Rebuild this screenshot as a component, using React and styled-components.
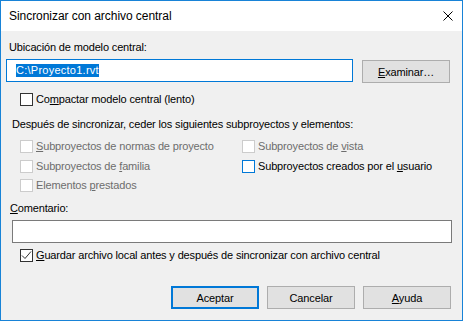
import React from "react";
import styled, { createGlobalStyle, css } from "styled-components";

const Global = createGlobalStyle`
  html, body { margin: 0; padding: 0; background: #f0f0f0; }
  body { font-family: "Liberation Sans", Arial, sans-serif; }
  * { box-sizing: border-box; }
`;

const Window = styled.div`
  width: 463px;
  height: 321px;
  border: 1px solid #1883d7;
  background: #f0f0f0;
  display: flex;
  flex-direction: column;
  overflow: hidden;
`;

const TitleBar = styled.div`
  height: 30px;
  flex: none;
  background: #ffffff;
  display: flex;
  align-items: center;
  padding: 0 9px 0 8px;
  font-size: 12px;
  letter-spacing: -0.05px;
  color: #000;
`;

const Title = styled.div`
  flex: 1;
`;

const CloseBtn = styled.svg`
  width: 10px;
  height: 10px;
  display: block;
`;

const Body = styled.div`
  flex: 1;
  display: flex;
  flex-direction: column;
  padding: 0 10px 0 5px;
  font-size: 11px;
  letter-spacing: -0.15px;
  color: #000;
`;

const Label = styled.div`
  height: 15px;
  line-height: 15px;
  white-space: nowrap;
  margin-top: ${(p) => p.$mt}px;
  margin-left: ${(p) => p.$ml}px;
`;

const InputRow = styled.div`
  display: flex;
  align-items: flex-start;
  margin-top: 4px;
`;

const TextInput = styled.div`
  width: 347px;
  height: 23px;
  background: #ffffff;
  border: 1px solid ${(p) => (p.$focused ? "#0078d7" : "#7a7a7a")};
  display: flex;
  align-items: center;
  padding-left: 9px;
  margin-left: ${(p) => p.$ml || 0}px;
  ${(p) => p.$grow && css`width: auto; flex: 1;`}
`;

const Selection = styled.span`
  background: #0078d7;
  color: #ffffff;
  line-height: 13px;
  height: 13px;
  letter-spacing: 0.25px;
  white-space: nowrap;
`;

const Button = styled.button`
  width: 88px;
  height: 23px;
  margin: 0;
  padding: 0;
  background: #e1e1e1;
  border: ${(p) => (p.$default ? "2px solid #0078d7" : "1px solid #adadad")};
  font-family: "Liberation Sans", Arial, sans-serif;
  font-size: 11px;
  letter-spacing: -0.15px;
  color: #000;
  display: flex;
  align-items: center;
  justify-content: center;
  margin-top: ${(p) => p.$mt || 0}px;
  margin-left: ${(p) => p.$ml || 0}px;
`;

const CheckRow = styled.label`
  display: flex;
  align-items: center;
  gap: 3px;
  height: 15px;
  line-height: 15px;
  white-space: nowrap;
  color: ${(p) => (p.$disabled ? "#6d6d6d" : "#000")};
  margin-top: ${(p) => p.$mt || 0}px;
  margin-left: ${(p) => p.$ml || 0}px;
`;

const Box = styled.span`
  width: 13px;
  height: 13px;
  flex: none;
  background: #ffffff;
  border: 1px solid
    ${(p) => (p.$disabled ? "#cccccc" : p.$focused ? "#0078d7" : "#333333")};
  display: flex;
  align-items: center;
  justify-content: center;
`;

const CheckSvg = styled.svg`
  width: 11px;
  height: 11px;
  display: block;
`;

const OptionsGrid = styled.div`
  display: grid;
  grid-template-columns: 222px 1fr;
  grid-auto-rows: 15px;
  row-gap: 4.5px;
  margin-top: 7px;
  margin-left: 14px;
`;

const ButtonBar = styled.div`
  display: flex;
  justify-content: flex-end;
  gap: 8px;
  margin-top: 23px;
  padding-right: 1px;
`;

const U = styled.span`
  text-decoration: underline;
  text-underline-offset: 1px;
`;

function Checkbox({ children, checked, disabled, focused, mt, ml }) {
  return (
    <CheckRow $disabled={disabled} $mt={mt} $ml={ml}>
      <Box $disabled={disabled} $focused={focused}>
        {checked && (
          <CheckSvg viewBox="0 0 11 11">
            <polyline
              points="1,5.5 4,8.5 10,1.5"
              fill="none"
              stroke="#333"
              strokeWidth="1"
            />
          </CheckSvg>
        )}
      </Box>
      <span>{children}</span>
    </CheckRow>
  );
}

export default function App() {
  return (
    <>
      <Global />
      <Window>
        <TitleBar>
          <Title>Sincronizar con archivo central</Title>
          <CloseBtn viewBox="0 0 10 10">
            <path d="M0.5 0.5 L9.5 9.5 M9.5 0.5 L0.5 9.5" stroke="#000" strokeWidth="1" fill="none" />
          </CloseBtn>
        </TitleBar>
        <Body>
          <Label $mt={9} $ml={3}>Ubicación de modelo central:</Label>
          <InputRow>
            <TextInput $focused>
              <Selection>C:\Proyecto1.rvt</Selection>
            </TextInput>
            <Button $ml={9} $mt={1}>
              <span><U>E</U>xaminar…</span>
            </Button>
          </InputRow>
          <Checkbox mt={9} ml={14}>
            Co<U>m</U>pactar modelo central (lento)
          </Checkbox>
          <Label $mt={10} $ml={6}>
            Después de sincronizar, ceder los siguientes subproyectos y elementos:
          </Label>
          <OptionsGrid>
            <Checkbox disabled>
              <U>S</U>ubproyectos de normas de proyecto
            </Checkbox>
            <Checkbox disabled>
              Subproyectos de <U>v</U>ista
            </Checkbox>
            <Checkbox disabled>
              Subproyectos de <U>f</U>amilia
            </Checkbox>
            <Checkbox focused>
              Subproyectos creados por el <U>u</U>suario
            </Checkbox>
            <Checkbox disabled>
              Elementos <U>p</U>restados
            </Checkbox>
          </OptionsGrid>
          <Label $mt={8} $ml={4}>
            <U>C</U>omentario:
          </Label>
          <InputRow>
            <TextInput $grow $ml={6} />
          </InputRow>
          <Checkbox checked mt={5} ml={14}>
            <U>G</U>uardar archivo local antes y después de sincronizar con archivo central
          </Checkbox>
          <ButtonBar>
            <Button $default>Aceptar</Button>
            <Button>Cancelar</Button>
            <Button>
              <span><U>A</U>yuda</span>
            </Button>
          </ButtonBar>
        </Body>
      </Window>
    </>
  );
}
